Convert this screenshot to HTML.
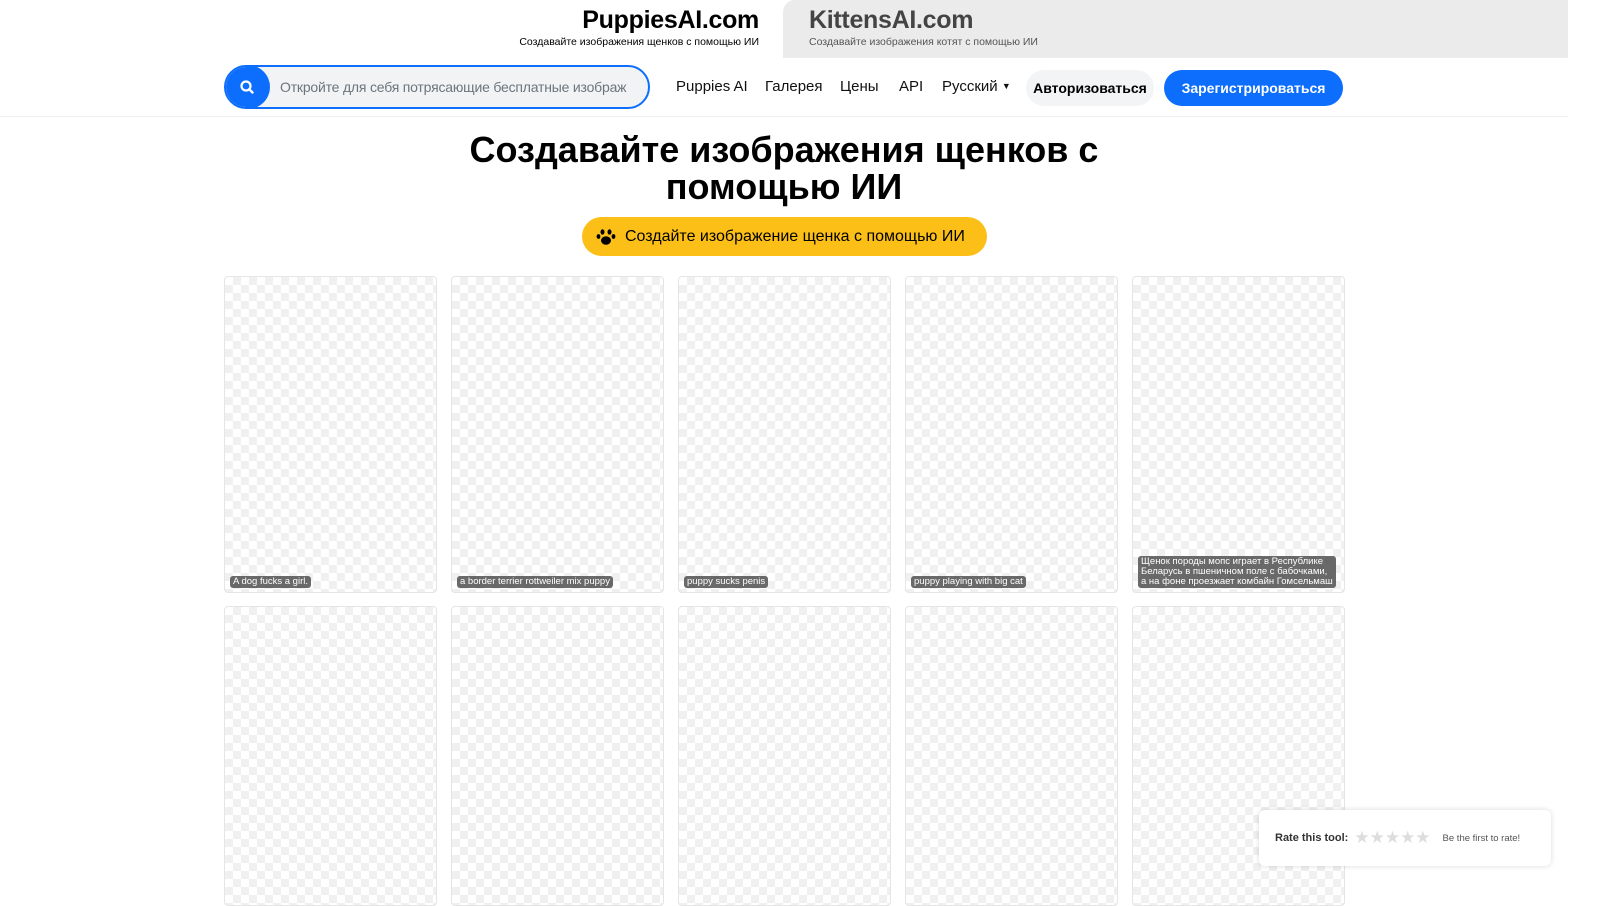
<!DOCTYPE html>
<html><head><meta charset="utf-8"><style>
*{box-sizing:border-box;margin:0;padding:0}
body{width:1600px;height:900px;overflow:hidden;background:#fff;font-family:"Liberation Sans","DejaVu Sans",sans-serif;position:relative;color:#000}
.tab{position:absolute;top:0;height:58px}
.t1{left:0;width:783px;text-align:right;padding-right:24px}
.t2{left:783px;width:785px;background:#ebebeb;border-top-left-radius:12px;padding-left:26px}
.tab b{display:block;font-size:25px;margin-top:6px;letter-spacing:-.3px}
.tab span{display:block;font-size:10.5px;margin-top:1px}
.t2 b{color:#444}.t2 span{color:#555}
.sb{position:absolute;right:0;top:0;width:32px;height:900px;background:#fff}
.search{position:absolute;left:224px;top:65px;width:426px;height:44px;border:2px solid #0d6efd;border-radius:22px;background:#f1f3f5;overflow:hidden}
.search .ic{position:absolute;left:-2px;top:-2px;width:46px;height:44px;background:#0d6efd;border-radius:22px;display:flex;align-items:center;justify-content:center}
.search .ph{position:absolute;left:54px;top:12px;font-size:14px;color:#6c757d;white-space:nowrap;letter-spacing:-.2px}
.nav{position:absolute;top:78px;font-size:15px;color:#111}
.btn1{position:absolute;left:1026px;top:70px;width:128px;height:36px;border-radius:18px;background:#f3f4f6;font-weight:bold;font-size:14px;display:flex;align-items:center;justify-content:center}
.btn2{position:absolute;left:1164px;top:70px;width:179px;height:36px;border-radius:18px;background:#0d6efd;color:#fff;font-weight:bold;font-size:14px;display:flex;align-items:center;justify-content:center}
.line{position:absolute;left:0;top:116px;width:1568px;height:1px;background:#eee}
h1{position:absolute;left:0;width:1568px;top:131px;text-align:center;font-size:36px;line-height:37px;font-weight:bold}
.cta{position:absolute;left:582px;top:217px;width:405px;height:39px;border-radius:20px;background:#fbbf17;font-size:16px;display:flex;align-items:center;padding-left:43px}
.card{position:absolute;width:213px;border:1px solid #e5e5e5;border-radius:4px;background-color:#fff;background-image:linear-gradient(45deg,#f0f0f0 25%,transparent 25%,transparent 75%,#f0f0f0 75%),linear-gradient(45deg,#f0f0f0 25%,transparent 25%,transparent 75%,#f0f0f0 75%);background-size:16px 16px;background-position:0 0,8px 8px;overflow:hidden}
.cap{position:absolute;left:5px;bottom:4px;background:rgba(80,80,80,.85);color:#fff;font-size:9.5px;line-height:10px;padding:1px 3px;border-radius:3px}
.rate{position:absolute;left:1259px;top:810px;width:292px;height:56px;background:#fff;border-radius:6px;box-shadow:0 0 6px rgba(0,0,0,.15);font-size:11px;display:flex;align-items:center;padding-left:16px}
.rate .st{color:#ddd;font-size:17px;margin:0 12px 0 6px;letter-spacing:0}
</style></head><body>
<div class="tab t1"><b>PuppiesAI.com</b><span>Создавайте изображения щенков с помощью ИИ</span></div>
<div class="tab t2"><b>KittensAI.com</b><span>Создавайте изображения котят с помощью ИИ</span></div>
<div class="search"><div class="ic"><svg width="16" height="16" viewBox="0 0 16 16"><circle cx="7" cy="7" r="4.5" fill="none" stroke="#fff" stroke-width="2.2"/><path d="M10.3 10.3L13.5 13.5" stroke="#fff" stroke-width="2.4" stroke-linecap="round"/></svg></div><div class="ph">Откройте для себя потрясающие бесплатные изображ</div></div>
<div class="nav" style="left:676px">Puppies AI</div>
<div class="nav" style="left:765px">Галерея</div>
<div class="nav" style="left:840px">Цены</div>
<div class="nav" style="left:899px">API</div>
<div class="nav" style="left:942px">Русский <span style="font-size:9px;vertical-align:2px">▼</span></div>
<div class="btn1">Авторизоваться</div>
<div class="btn2">Зарегистрироваться</div>
<div class="line"></div>
<h1>Создавайте изображения щенков с<br>помощью ИИ</h1>
<div class="cta"><svg style="position:absolute;left:14px;top:10px" width="20" height="19" viewBox="0 0 20 19"><ellipse cx="10" cy="13.5" rx="5" ry="4.3"/><ellipse cx="6.5" cy="5" rx="2" ry="2.7"/><ellipse cx="13.5" cy="5" rx="2" ry="2.7"/><ellipse cx="2.5" cy="9.5" rx="1.9" ry="2.4"/><ellipse cx="17.5" cy="9.5" rx="1.9" ry="2.4"/></svg>Создайте изображение щенка с помощью ИИ</div>
<div class="card" style="left:224px;top:276px;height:317px"><div class="cap">A dog fucks a girl.</div></div>
<div class="card" style="left:451px;top:276px;height:317px"><div class="cap">a border terrier rottweiler mix puppy</div></div>
<div class="card" style="left:678px;top:276px;height:317px"><div class="cap">puppy sucks penis</div></div>
<div class="card" style="left:905px;top:276px;height:317px"><div class="cap">puppy playing with big cat</div></div>
<div class="card" style="left:1132px;top:276px;height:317px"><div class="cap">Щенок породы мопс играет в Республике<br>Беларусь в пшеничном поле с бабочками,<br>а на фоне проезжает комбайн Гомсельмаш</div></div>
<div class="card" style="left:224px;top:606px;height:300px"></div>
<div class="card" style="left:451px;top:606px;height:300px"></div>
<div class="card" style="left:678px;top:606px;height:300px"></div>
<div class="card" style="left:905px;top:606px;height:300px"></div>
<div class="card" style="left:1132px;top:606px;height:300px"></div>
<div class="rate"><b style="font-weight:bold;color:#333">Rate this tool:</b><span class="st">★★★★★</span><span style="font-size:9.5px;color:#555">Be the first to rate!</span></div>
<div class="sb"></div>
</body></html>
